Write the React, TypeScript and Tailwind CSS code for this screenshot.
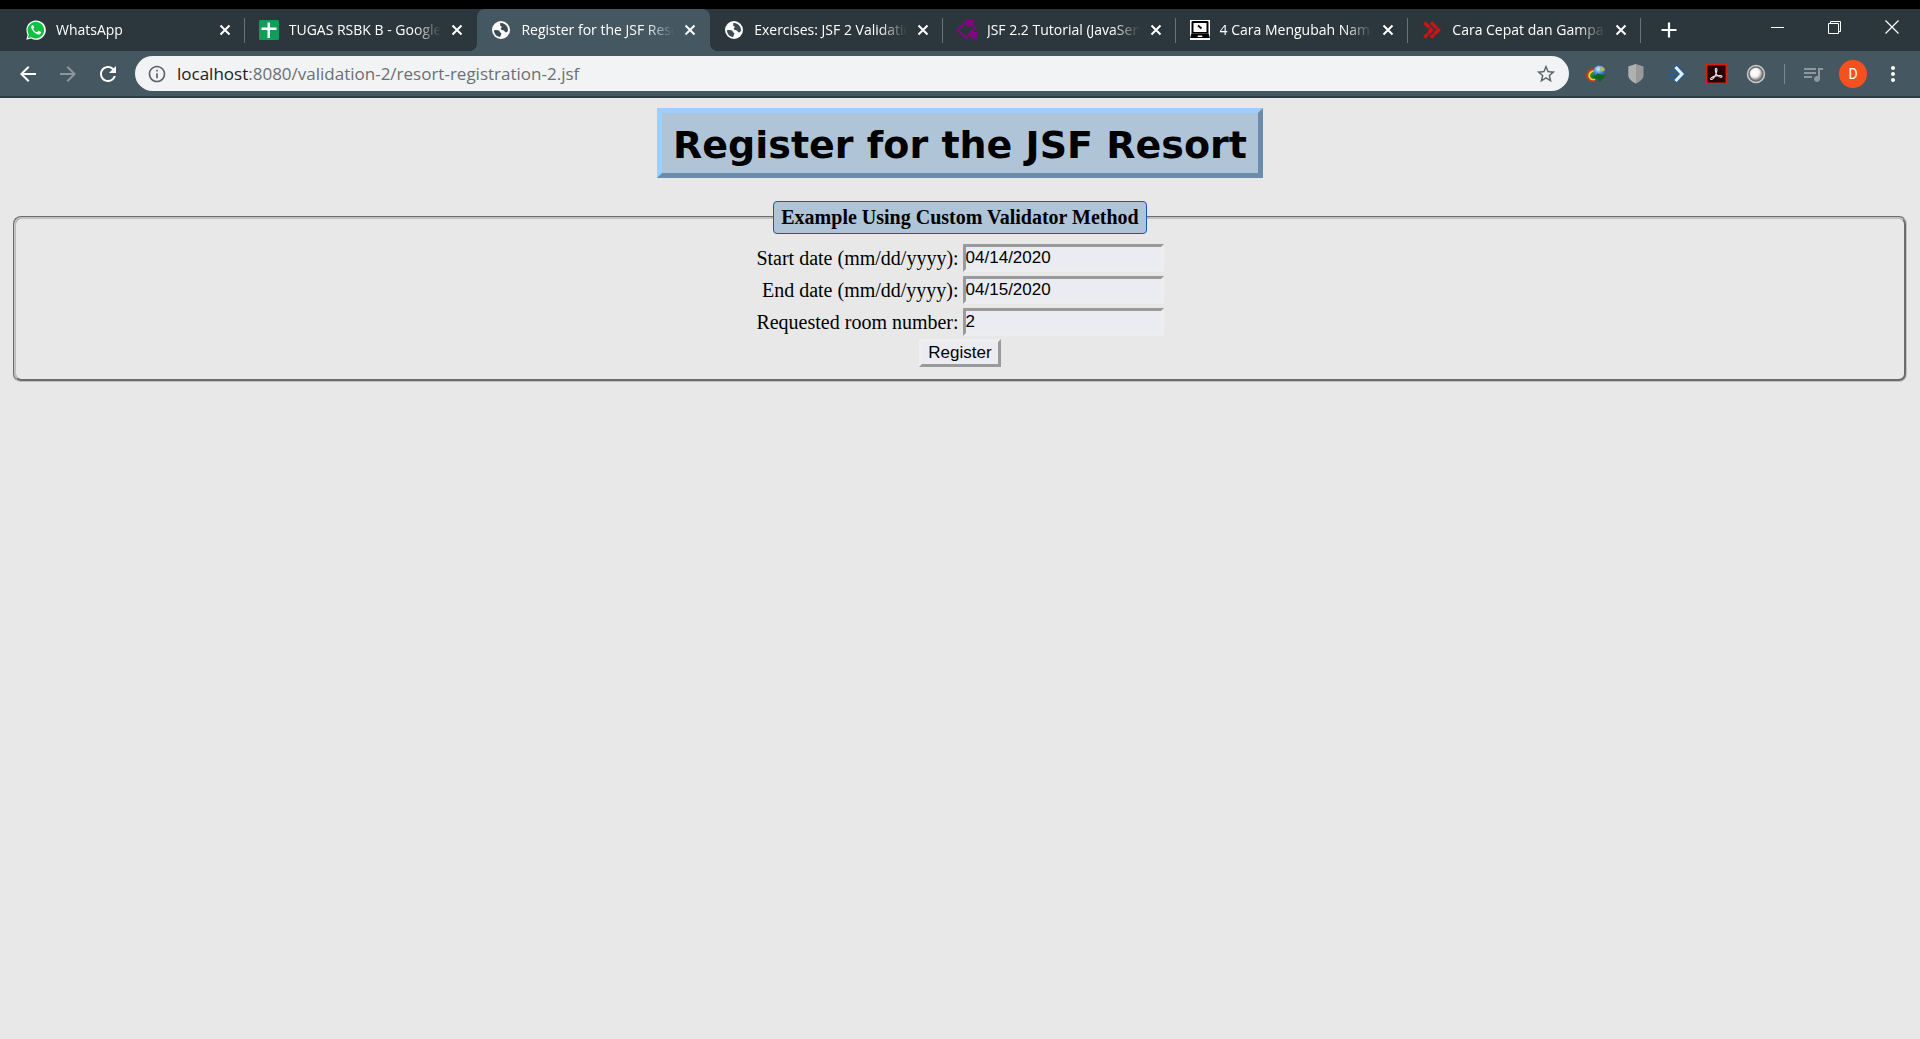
import React from "react";
import {
  MdArrowBack,
  MdArrowForward,
  MdInfoOutline,
  MdMoreVert,
  MdQueueMusic,
  MdRefresh,
  MdStarBorder,
} from "react-icons/md";

const WhatsAppIcon = () => (
  <svg viewBox="0 0 20 20" className="size-5">
    <path d="M0.3 19.8 L1.6 14.8 A9.7 9.7 0 1 1 5.2 18.5 Z" fill="#fff" />
    <path d="M1.9 18.2 L2.8 14.6 A8.3 8.3 0 1 1 5.4 17.2 Z" fill="#0fc143" />
    <path
      d="M7.4 5.4c-.3-.6-.9-.6-1.3-.2-.9.9-1.1 2.2-.5 3.5 1.2 2.6 3 4.5 5.7 5.5 1.4.5 2.9.1 3.5-1 .4-.8.3-1.2-.2-1.5l-1.7-.8c-.4-.2-.7-.1-1 .3l-.6.8c-.2.2-.4.3-.8.1-1.4-.6-2.4-1.5-3.2-2.9-.2-.3-.1-.5.1-.7l.6-.7c.1-.2.2-.4.1-.7z"
      fill="#fff"
    />
  </svg>
);

const SheetsIcon = () => (
  <svg viewBox="0 0 20 20" className="size-5">
    <rect width="20" height="20" rx="1.5" fill="#0f9d58" />
    <path d="M8.5 2.5h2.5v5h6.5v2.5h-6.5v8h-2.5v-8H2.5V7.500h6z" fill="#fff" />
  </svg>
);

const GlobeIcon = () => (
  <svg viewBox="0 0 20 20" className="size-5">
    <circle cx="10" cy="10" r="9" fill="#fff" />
    <path
      d="M3 10.2c1.5-.4 3.8-.4 5 .3 1 .6.6 1.8 1.7 2.2.9.3.9 1.3.3 2-.5.6-.3 1.5-1 2.3C5.6 16.600 3 13.8 3 10.2z"
      fill="#3d4b53"
    />
    <path
      d="M9 3.1c2.6-.4 4.8.6 6.2 2.3 1.2 1.4 1.8 3 1.8 4.8-.3 1.3-1 2.2-2 2.3-1-.1-1.4-1.2-2.2-1.9-.9-.8-2.600-.3-3-1.4-.3-1 .9-1.3 1-2.2.1-.8-1.3-.7-1.6-1.6C8.9 4.6 9.600 4 9 3.1z"
      fill="#3d4b53"
    />
  </svg>
);

const TagIcon = () => (
  <svg viewBox="0 0 22 20" className="h-5 w-[22px]" stroke="#8a008a" fill="none">
    <path d="M11 1 1.5 10l9 8.5M20.5 5.5 10 18" strokeWidth="1.8" />
    <path d="M11 .5h6v5.5h-6zM15 12.5h5.5v5.5H15z" fill="#8a008a" strokeWidth="1" />
    <path d="M12.5 2.5l3 1.5M16 15l3 1" stroke="#53235d" strokeWidth="1" />
  </svg>
);

const LaptopIcon = () => (
  <svg viewBox="0 0 20 20" className="size-5">
    <rect width="20" height="20" fill="#fff" />
    <path d="M2.5 1h15a1 1 0 0 1 1 1v11.5h-17V2a1 1 0 0 1 1-1z" fill="#000" />
    <path d="M3.5 3h13v9h-13z" fill="#fff" />
    <path d="M1.5 13.5h17l1.5 4.5H0z" fill="#000" />
    <path d="M8 15.5h4l.5 1.500h-5z" fill="#fff" />
    <path d="M8 5.5l3.5 3" stroke="#000" strokeWidth="1.8" fill="none" />
  </svg>
);

const ChevronsIcon = () => (
  <svg viewBox="0 0 18 18" className="size-[18px]" fill="none" stroke="#d01414" strokeWidth="3.4">
    <path d="M1.5 1.5 8.5 9l-7 7.5" strokeDasharray="7 .8" />
    <path d="M8 1.5 15.5 9 8 16.5" strokeDasharray="8 .6" />
  </svg>
);

const DownloadGlobeIcon = () => (
  <svg viewBox="0 0 20 18" className="h-[18px] w-5">
    <defs>
      <radialGradient id="idmBall" cx=".4" cy=".3" r=".8">
        <stop offset="0" stopColor="#d8ecff" />
        <stop offset=".45" stopColor="#4a90d9" />
        <stop offset="1" stopColor="#173a78" />
      </radialGradient>
    </defs>
    <path d="M9 4C4 4 .8 7 1 10.5 1.2 14.5 5 16.5 9 15.5" fill="none" stroke="#d9331f" strokeWidth="2" />
    <path d="M9 6C5 6 3 8.5 3.2 10.8 3.5 13.5 6 15 9 14" fill="none" stroke="#f2d31b" strokeWidth="2" />
    <path d="M9 8c-2.5 0-4 1.5-3.8 3.2.2 1.6 2 2 4 1.5" fill="none" stroke="#1f9d2c" strokeWidth="2" />
    <circle cx="13.5" cy="6.5" r="6" fill="url(#idmBall)" />
    <path d="M15 1.5c2 0 3.5 1.2 4 3.5-1.5 1.5-2.5.5-3.5 2-1-.8-1.5-3.5-.5-5.5z" fill="#b9b93e" />
    <path d="M5 12l5-1 1-2.5 8.5 2-6 7-1.5-3.5z" fill="#0b6b10" />
  </svg>
);

const ShieldIcon = () => (
  <svg viewBox="0 0 16 20" className="h-5 w-4">
    <path d="M8 0 15.5 2.5v9c0 3.5-3.5 6-7.5 8-4-2-7.5-4.5-7.5-8v-9z" fill="#9a9a9a" />
    <path d="M8 0v19.5c-4-2-7.5-4.5-7.5-8v-9z" fill="#b0b0b0" />
  </svg>
);

const FastArrowIcon = () => (
  <svg viewBox="0 0 18 18" className="size-[18px]" fill="none">
    <path d="M0 6h8M1 9.5h9M0 13h8" stroke="#2b5f96" strokeWidth="1.3" />
    <path d="M8 1.5 15 9l-7 7.5" stroke="#1f5fae" strokeWidth="5" />
    <path d="M8.5 2 15 9l-6.5 7" stroke="#e6f3ff" strokeWidth="3" />
  </svg>
);

const AcrobatIcon = () => (
  <svg viewBox="0 0 21 20" className="h-5 w-[21px]">
    <rect x=".75" y=".75" width="19.5" height="18.5" fill="#230306" stroke="#d3230f" strokeWidth="1.5" />
    <path
      d="M10 4.2c1.3 0 1.2 3-.3 6.3-1.3 2.8-3.2 5.3-4.7 5-1.4-.8.8-2.6 4-3.4 3.3-.9 7.2-1 7 .4-.2 1.5-3.3.5-5-1.5C9.3 9.2 8.8 4.2 10 4.2z"
      fill="none"
      stroke="#f1e5e5"
      strokeWidth="1.1"
    />
  </svg>
);

const RingIcon = () => (
  <svg viewBox="0 0 20 20" className="size-5">
    <defs>
      <radialGradient id="ringBall" cx=".4" cy=".38" r=".6">
        <stop offset="0" stopColor="#fff" />
        <stop offset=".6" stopColor="#f2f2f2" />
        <stop offset="1" stopColor="#8c8c8c" />
      </radialGradient>
    </defs>
    <circle cx="10" cy="10" r="8.5" fill="#6d6d6d" stroke="#c9c9c9" strokeWidth="1.5" />
    <circle cx="10" cy="10" r="6.2" fill="url(#ringBall)" />
  </svg>
);

type Tab = { title: string; icon: React.ReactNode; active?: boolean; divider?: boolean };

const tabs: Tab[] = [
  { title: "WhatsApp", icon: <WhatsAppIcon />, divider: true },
  { title: "TUGAS RSBK B - Google Sheets", icon: <SheetsIcon /> },
  { title: "Register for the JSF Resort", icon: <GlobeIcon />, active: true },
  { title: "Exercises: JSF 2 Validation", icon: <GlobeIcon />, divider: true },
  { title: "JSF 2.2 Tutorial (JavaServer Faces)", icon: <TagIcon />, divider: true },
  { title: "4 Cara Mengubah Nama File", icon: <LaptopIcon />, divider: true },
  { title: "Cara Cepat dan Gampang", icon: <ChevronsIcon />, divider: true },
];

const CloseIcon = () => (
  <svg viewBox="0 0 12 12" className="size-3" stroke="#fff" strokeWidth="2">
    <path d="M1.5 1.5l9 9M10.5 1.5l-9 9" />
  </svg>
);

function TabItem({ tab }: { tab: Tab }) {
  return (
    <div
      className={
        tab.active
          ? "relative flex min-w-0 flex-1 items-center rounded-t-lg bg-[#455760] pr-2 pl-3"
          : "relative flex min-w-0 flex-1 items-center pr-2 pl-3"
      }
    >
      {tab.active && (
        <>
          <span className="absolute bottom-0 -left-2 size-2 bg-[radial-gradient(circle_at_0_0,transparent_8px,#455760_8px)]" />
          <span className="absolute -right-2 bottom-0 size-2 bg-[radial-gradient(circle_at_100%_0,transparent_8px,#455760_8px)]" />
        </>
      )}
      <button type="button" className="flex min-w-0 flex-1 items-center gap-2 text-left">
        <span className="flex w-6 shrink-0 justify-center">{tab.icon}</span>
        <span className="min-w-0 flex-1 overflow-hidden text-sm whitespace-nowrap text-white [mask-image:linear-gradient(to_right,black_82%,transparent)]">
          {tab.title}
        </span>
      </button>
      <button type="button" aria-label={`Close ${tab.title}`} className="ml-1 flex size-6 shrink-0 items-center justify-center">
        <CloseIcon />
      </button>
      {tab.divider && <span className="absolute right-0 h-[25px] w-px bg-[#66737a]" />}
    </div>
  );
}

function ToolButton({ label, children }: { label: string; children: React.ReactNode }) {
  return (
    <button type="button" aria-label={label} className="flex h-full w-10 shrink-0 items-center justify-center text-white">
      {children}
    </button>
  );
}

function BrowserChrome() {
  return (
    <header className="border-t-9 border-black font-['Open_Sans','Noto_Sans',sans-serif]">
      <div className="flex h-[42px] bg-[#2c373d]">
        <nav aria-label="Tabs" className="flex min-w-0 flex-1 pl-3">
          {tabs.map((tab) => (
            <TabItem key={tab.title} tab={tab} />
          ))}
        </nav>
        <div className="flex shrink-0">
          <button type="button" aria-label="New tab" className="flex w-14 items-center justify-center">
            <svg viewBox="0 0 16 16" className="size-4" stroke="#fff" strokeWidth="2.2">
              <path d="M8 .5v15M.5 8h15" />
            </svg>
          </button>
          <div className="ml-[52px] flex h-9">
            <button type="button" aria-label="Minimize" className="flex w-[57px] items-center justify-center">
              <span className="h-px w-[13px] bg-white" />
            </button>
            <button type="button" aria-label="Restore" className="flex w-[57px] items-center justify-center">
              <svg viewBox="0 0 13 13" className="size-[13px]" fill="none" stroke="#fff">
                <path d="M.5 2.5h10v10h-10zM2.5 2.5v-2h10v10h-2" />
              </svg>
            </button>
            <button type="button" aria-label="Close window" className="flex w-[57px] items-center justify-center">
              <svg viewBox="0 0 14 14" className="size-[14px]" stroke="#fff" strokeWidth="1.2">
                <path d="M.5.5l13 13M13.5.5l-13 13" />
              </svg>
            </button>
          </div>
        </div>
      </div>

      <div className="flex h-[47px] items-center border-b-2 border-[#2f3d45] bg-[#455760] pr-[7px] pl-2">
        <div className="flex h-full">
          <ToolButton label="Back">
            <MdArrowBack className="size-6" />
          </ToolButton>
          <ToolButton label="Forward">
            <MdArrowForward className="size-6 text-[#8b979d]" />
          </ToolButton>
          <ToolButton label="Reload">
            <MdRefresh className="size-6" />
          </ToolButton>
        </div>
        <div className="mx-[7px] flex h-[35px] min-w-0 flex-1 items-center rounded-full bg-[#f1f3f5] text-[#5f6368]">
          <button type="button" aria-label="Site information" className="ml-3 flex shrink-0">
            <MdInfoOutline className="size-5" />
          </button>
          <p className="ml-2.5 flex-1 text-[17px] leading-6 whitespace-nowrap text-[#6b6f73]">
            <span className="text-[#202124]">localhost</span>:8080/validation-2/resort-registration-2.jsf
          </p>
          <button type="button" aria-label="Bookmark" className="mr-3 flex shrink-0">
            <MdStarBorder className="size-[22px]" />
          </button>
        </div>
        <div className="flex h-full items-center">
          <ToolButton label="Download manager"><DownloadGlobeIcon /></ToolButton>
          <ToolButton label="Shield"><ShieldIcon /></ToolButton>
          <ToolButton label="Fast forward"><FastArrowIcon /></ToolButton>
          <ToolButton label="Acrobat"><AcrobatIcon /></ToolButton>
          <ToolButton label="Recorder"><RingIcon /></ToolButton>
          <span className="mx-2 h-5 w-px bg-[#7a878e]" />
          <ToolButton label="Media playlist"><MdQueueMusic className="size-6 text-[#8d999f]" /></ToolButton>
          <ToolButton label="Profile">
            <span className="flex size-7 items-center justify-center rounded-full bg-[#f4511e] font-['Roboto',sans-serif] text-sm">D</span>
          </ToolButton>
          <ToolButton label="Menu"><MdMoreVert className="size-6" /></ToolButton>
        </div>
      </div>
    </header>
  );
}

const fields = [
  { id: "start", label: "Start date (mm/dd/yyyy):", value: "04/14/2020" },
  { id: "end", label: "End date (mm/dd/yyyy):", value: "04/15/2020" },
  { id: "room", label: "Requested room number:", value: "2" },
];

export default function App() {
  return (
    <div className="min-h-screen bg-[#e8e8e8] text-black">
      <BrowserChrome />
      <main className="px-[13px] pt-2.5 font-['Liberation_Serif',serif] text-xl">
        <h1 className="mx-auto w-fit border-5 border-t-[#9bcffe] border-r-[#6b8cab] border-b-[#6b8cab] border-l-[#9bcffe] bg-[#b0c4d8] px-[11px] pt-1 font-['DejaVu_Sans',sans-serif] text-[38px] leading-[56px] font-bold">
          Register for the JSF Resort
        </h1>
        <form onSubmit={(e) => e.preventDefault()}>
          <fieldset className="mt-[23px] rounded-lg border-3 border-[#c0c0c0] [border-style:groove] pt-2.5 pb-3">
            <legend className="mx-auto rounded border border-[#1a56c4] bg-[#b0c4d8] px-[7px] leading-[31px] font-bold">
              Example Using Custom Validator Method
            </legend>
            <div className="mx-auto grid w-fit grid-cols-[auto_auto] gap-1">
              {fields.map((f) => (
                <React.Fragment key={f.id}>
                  <label htmlFor={f.id} className="text-right leading-7">
                    {f.label}
                  </label>
                  <input
                    id={f.id}
                    type="text"
                    defaultValue={f.value}
                    className="h-7 w-[201px] border-3 border-t-[#9a9a9a] border-r-[#eeeeee] border-b-[#eeeeee] border-l-[#9a9a9a] bg-[#ebecf2] font-['Liberation_Sans',sans-serif] text-[17px]"
                  />
                </React.Fragment>
              ))}
            </div>
            <button
              type="submit"
              className="mx-auto mt-[3px] block h-7 border-3 border-t-[#eeeeee] border-r-[#9a9a9a] border-b-[#9a9a9a] border-l-[#eeeeee] bg-[#ebecf2] px-1.5 font-['Liberation_Sans',sans-serif] text-[17px] leading-[22px]"
            >
              Register
            </button>
          </fieldset>
        </form>
      </main>
    </div>
  );
}
